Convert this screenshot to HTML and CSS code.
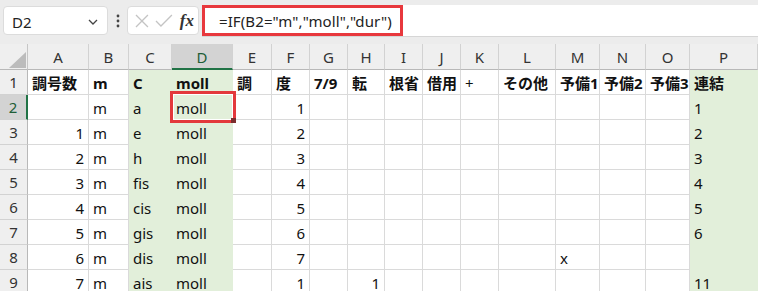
FILE: index.html
```html
<!DOCTYPE html>
<html lang="ja">
<head>
  <meta charset="UTF-8" />
  <title>Excel - 調号</title>
  <link rel="stylesheet" href="styles.css">
</head>
<body>
  <div class="formula-bar">
    <div class="name-box">
      <span>D2</span>
      <svg class="chev" width="10" height="6" viewBox="0 0 10 6"><path d="M1 1 L5 5 L9 1" fill="none" stroke="#444" stroke-width="1.3"/></svg>
    </div>
    <svg class="dots" width="4" height="14" viewBox="0 0 4 14"><circle cx="2" cy="2" r="1.4" fill="#444"/><circle cx="2" cy="7" r="1.4" fill="#444"/><circle cx="2" cy="12" r="1.4" fill="#444"/></svg>
    <div class="fx-box">
      <svg width="16" height="16" viewBox="0 0 16 16"><path d="M2 2 L14 14 M14 2 L2 14" stroke="#c4c4c4" stroke-width="1.3"/></svg>
      <svg width="18" height="16" viewBox="0 0 18 16"><path d="M1 8 L6 13 L17 2" fill="none" stroke="#c4c4c4" stroke-width="1.3"/></svg>
      <span class="fx">fx</span>
    </div>
    <div class="formula-input">
      <span class="formula">=IF(B2="m","moll","dur")</span>
    </div>
  </div>

  <div class="sheet">
    <div class="row head">
      <div class="corner"><svg width="22" height="20" viewBox="0 0 22 20"><path d="M21 3 L21 19 L4 19 Z" fill="#bcbcbc"/></svg></div>
      <div class="ch">A</div><div class="ch">B</div><div class="ch">C</div><div class="ch sel">D</div>
      <div class="ch">E</div><div class="ch">F</div><div class="ch">G</div><div class="ch">H</div>
      <div class="ch">I</div><div class="ch">J</div><div class="ch">K</div><div class="ch">L</div>
      <div class="ch">M</div><div class="ch">N</div><div class="ch">O</div><div class="ch">P</div>
    </div>

    <div class="row bold">
      <div class="rh">1</div>
      <div class="c">調号数</div><div class="c">m</div><div class="c g">C</div><div class="c g">moll</div>
      <div class="c">調</div><div class="c">度</div><div class="c">7/9</div><div class="c">転</div>
      <div class="c">根省</div><div class="c">借用</div><div class="c thin">+</div><div class="c">その他</div>
      <div class="c">予備1</div><div class="c">予備2</div><div class="c">予備3</div><div class="c g">連結</div>
    </div>

    <div class="row">
      <div class="rh sel">2</div>
      <div class="c n"></div><div class="c">m</div><div class="c g">a</div><div class="c g">moll</div>
      <div class="c"></div><div class="c n">1</div><div class="c"></div><div class="c"></div>
      <div class="c"></div><div class="c"></div><div class="c"></div><div class="c"></div>
      <div class="c"></div><div class="c"></div><div class="c"></div><div class="c g">1</div>
    </div>

    <div class="row">
      <div class="rh">3</div>
      <div class="c n">1</div><div class="c">m</div><div class="c g">e</div><div class="c g">moll</div>
      <div class="c"></div><div class="c n">2</div><div class="c"></div><div class="c"></div>
      <div class="c"></div><div class="c"></div><div class="c"></div><div class="c"></div>
      <div class="c"></div><div class="c"></div><div class="c"></div><div class="c g">2</div>
    </div>

    <div class="row">
      <div class="rh">4</div>
      <div class="c n">2</div><div class="c">m</div><div class="c g">h</div><div class="c g">moll</div>
      <div class="c"></div><div class="c n">3</div><div class="c"></div><div class="c"></div>
      <div class="c"></div><div class="c"></div><div class="c"></div><div class="c"></div>
      <div class="c"></div><div class="c"></div><div class="c"></div><div class="c g">3</div>
    </div>

    <div class="row">
      <div class="rh">5</div>
      <div class="c n">3</div><div class="c">m</div><div class="c g">fis</div><div class="c g">moll</div>
      <div class="c"></div><div class="c n">4</div><div class="c"></div><div class="c"></div>
      <div class="c"></div><div class="c"></div><div class="c"></div><div class="c"></div>
      <div class="c"></div><div class="c"></div><div class="c"></div><div class="c g">4</div>
    </div>

    <div class="row">
      <div class="rh">6</div>
      <div class="c n">4</div><div class="c">m</div><div class="c g">cis</div><div class="c g">moll</div>
      <div class="c"></div><div class="c n">5</div><div class="c"></div><div class="c"></div>
      <div class="c"></div><div class="c"></div><div class="c"></div><div class="c"></div>
      <div class="c"></div><div class="c"></div><div class="c"></div><div class="c g">5</div>
    </div>

    <div class="row">
      <div class="rh">7</div>
      <div class="c n">5</div><div class="c">m</div><div class="c g">gis</div><div class="c g">moll</div>
      <div class="c"></div><div class="c n">6</div><div class="c"></div><div class="c"></div>
      <div class="c"></div><div class="c"></div><div class="c"></div><div class="c"></div>
      <div class="c"></div><div class="c"></div><div class="c"></div><div class="c g">6</div>
    </div>

    <div class="row">
      <div class="rh">8</div>
      <div class="c n">6</div><div class="c">m</div><div class="c g">dis</div><div class="c g">moll</div>
      <div class="c"></div><div class="c n">7</div><div class="c"></div><div class="c"></div>
      <div class="c"></div><div class="c"></div><div class="c"></div><div class="c"></div>
      <div class="c">x</div><div class="c"></div><div class="c"></div><div class="c g"></div>
    </div>

    <div class="row">
      <div class="rh">9</div>
      <div class="c n">7</div><div class="c">m</div><div class="c g">ais</div><div class="c g">moll</div>
      <div class="c"></div><div class="c n">1</div><div class="c"></div><div class="c n">1</div>
      <div class="c"></div><div class="c"></div><div class="c"></div><div class="c"></div>
      <div class="c"></div><div class="c"></div><div class="c"></div><div class="c g">11</div>
    </div>

    <div class="active-cell"><span class="handle"></span></div>
  </div>
</body>
</html>
```

FILE: styles.css
```css
body {
  margin: 0;
  padding: 0;
  background: #fff;
  font-family: "Noto Sans", "Noto Sans CJK JP", sans-serif;
  color: #111;
  overflow: hidden;
}

/* formula bar */
.formula-bar {
  height: 44px;
  background: #ececec;
  display: flex;
  align-items: flex-start;
  padding-top: 5px;
  box-sizing: border-box;
}

.name-box {
  margin-left: 3px;
  margin-top: 1px;
  width: 105px;
  height: 29px;
  box-sizing: border-box;
  background: #fff;
  border: 1px solid #dcdcdc;
  border-radius: 4px;
  display: flex;
  align-items: center;
  justify-content: space-between;
  padding: 2px 9px 0 8px;
  font-size: 15px;
  color: #222;
}

.chev {
  margin-top: 1px;
}

.dots {
  margin: 9px 7px 0 8px;
}

.fx-box {
  margin-top: 1px;
  width: 72px;
  height: 29px;
  box-sizing: border-box;
  background: #fff;
  border: 1px solid #dcdcdc;
  border-radius: 4px;
  display: flex;
  align-items: center;
  gap: 5px;
  padding: 0 4px 0 6px;
}

.fx {
  font-family: "Liberation Serif", serif;
  font-style: italic;
  font-weight: bold;
  font-size: 17px;
  color: #333;
  margin-left: 2px;
}

.formula-input {
  flex: 1;
  margin-left: 3px;
  height: 31px;
  background: #fff;
  border-bottom: 1px solid #d6d6d6;
  display: flex;
}

.formula {
  border: 3px solid #e8383d;
  padding: 1px 8px 0 14px;
  display: flex;
  align-items: center;
  font-size: 15px;
  letter-spacing: 0.1px;
  color: #222;
  white-space: nowrap;
}

/* sheet grid */
.sheet {
  position: relative;
}

.row {
  display: grid;
  grid-template-columns: 28px 61px 40px 43px 61px 39px 38px 38px 37px 38px 38px 38px 57px 44px 46px 44px 68px;
  height: 25px;
}

.row.head {
  height: 26px;
}

.corner {
  background: #efefef;
  border-right: 1px solid #c6c6c6;
  border-bottom: 1px solid #b8b8b8;
  display: flex;
  align-items: flex-end;
  justify-content: flex-end;
}

.ch {
  background: #efefef;
  border-right: 1px solid #d2d2d2;
  border-bottom: 1px solid #b8b8b8;
  display: flex;
  align-items: center;
  justify-content: center;
  font-size: 15px;
  color: #333;
  padding-top: 1px;
}

.ch.sel {
  background: #d3d3d3;
  border-bottom: 2px solid #217346;
  color: #1e5e37;
}

.rh {
  background: #efefef;
  border-right: 1px solid #b8b8b8;
  border-bottom: 1px solid #d2d2d2;
  display: flex;
  align-items: center;
  justify-content: center;
  font-size: 15px;
  color: #333;
}

.rh.sel {
  background: #d3d3d3;
  border-right: 2px solid #217346;
  color: #1e5e37;
}

.c {
  border-right: 1px solid #dadada;
  border-bottom: 1px solid #dadada;
  display: flex;
  align-items: flex-end;
  padding: 0 4px 0 4px;
  font-size: 15px;
  line-height: 22px;
  white-space: nowrap;
  overflow: visible;
}

.c.n {
  justify-content: flex-end;
}

.c.g {
  background: #e2efda;
  border-color: #e2efda;
}

.bold .c {
  font-weight: bold;
}

.bold .c.thin {
  font-weight: normal;
}

/* selected cell marker */
.active-cell {
  position: absolute;
  left: 170px;
  top: 47px;
  width: 66px;
  height: 32px;
  box-sizing: border-box;
  border: 3px solid #e3393c;
  box-shadow: inset 0 0 0 1px #fff;
}

.handle {
  position: absolute;
  right: -3px;
  bottom: -3px;
  width: 5px;
  height: 5px;
  background: #7b2d2d;
}
```
